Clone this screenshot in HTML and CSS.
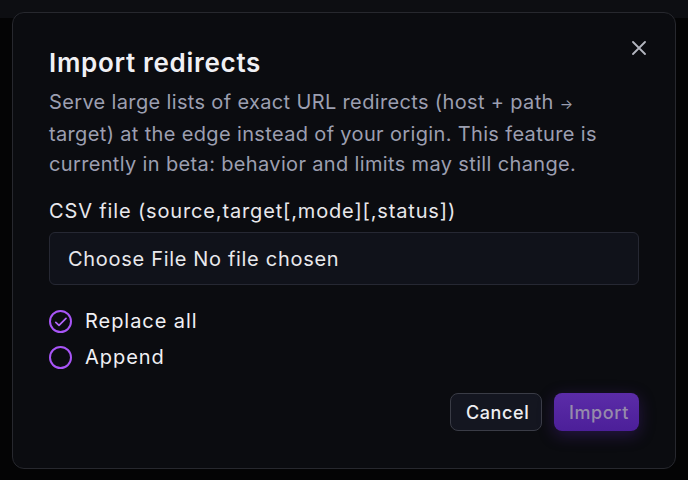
FILE: index.html
```html
<!DOCTYPE html>
<html lang="en">
<head>
    <meta charset="UTF-8">
    <meta name="viewport" content="width=device-width, initial-scale=1.0">
    <title>Import redirects</title>
    <link rel="stylesheet" href="styles.css">
</head>
<body>
    <div class="page-header"></div>

    <div class="overlay">
        <div class="modal" role="dialog" aria-labelledby="modalTitle">
            <button type="button" class="btn-close" aria-label="Close">
                <svg width="14" height="14" viewBox="0 0 14 14" fill="none">
                    <path d="M1 1L13 13M13 1L1 13" stroke="currentColor" stroke-width="1.8" stroke-linecap="round"/>
                </svg>
            </button>

            <h2 id="modalTitle" class="modal-title">Import redirects</h2>
            <p class="modal-desc">Serve large lists of exact URL redirects (host + path <span class="arrow">→</span> target) at the edge instead of your origin. This feature is currently in beta: behavior and limits may still change.</p>

            <form id="importForm">
                <div class="form-group">
                    <label for="csvFile">CSV file (source,target[,mode][,status])</label>
                    <div class="file-box">
                        <input type="file" id="csvFile" name="csvFile" accept=".csv">
                    </div>
                </div>

                <div class="radio-group">
                    <label class="radio">
                        <input type="radio" name="mode" value="replace" checked>
                        <span class="radio-mark">
                            <svg width="14" height="14" viewBox="0 0 14 14" fill="none">
                                <path d="M1.8 7.4L5 10.4L12 3.4" stroke="currentColor" stroke-width="1.7" stroke-linecap="round" stroke-linejoin="round"/>
                            </svg>
                        </span>
                        Replace all
                    </label>
                    <label class="radio">
                        <input type="radio" name="mode" value="append">
                        <span class="radio-mark">
                            <svg width="14" height="14" viewBox="0 0 14 14" fill="none">
                                <path d="M1.8 7.4L5 10.4L12 3.4" stroke="currentColor" stroke-width="1.7" stroke-linecap="round" stroke-linejoin="round"/>
                            </svg>
                        </span>
                        Append
                    </label>
                </div>

                <div class="modal-actions">
                    <button type="button" class="btn btn-cancel">Cancel</button>
                    <button type="submit" class="btn btn-import" disabled>Import</button>
                </div>
            </form>
        </div>
    </div>
</body>
</html>
```

FILE: styles.css
```css
* {
    margin: 0;
    padding: 0;
    box-sizing: border-box;
}

body {
    font-family: Inter, 'Noto Sans', 'DejaVu Sans', sans-serif;
    background: #040405;
    min-height: 100vh;
    color: #eeeef2;
}

.page-header {
    height: 18px;
    background: #0d0e12;
}

.overlay {
    position: fixed;
    inset: 0;
    padding: 12px;
    display: flex;
    align-items: flex-start;
    justify-content: center;
}

.modal {
    position: relative;
    width: 664px;
    background: #0b0c10;
    border: 1px solid #27282e;
    border-radius: 12px;
    padding: 34px 36px 37px;
}

.btn-close {
    position: absolute;
    top: 23px;
    right: 24px;
    width: 24px;
    height: 24px;
    display: flex;
    align-items: center;
    justify-content: center;
    background: none;
    border: none;
    color: #b4b6c0;
    cursor: pointer;
}

.modal-title {
    font-size: 26px;
    font-weight: 600;
    line-height: 32px;
    letter-spacing: 0.7px;
    color: #f0f0f4;
}

.modal-desc {
    margin-top: 8px;
    font-size: 20px;
    line-height: 30px;
    letter-spacing: 0.35px;
    color: #9c9fb0;
}

.modal-desc .arrow {
    font-size: 14px;
}

.form-group {
    margin-top: 17px;
}

.form-group label {
    display: block;
    font-size: 20px;
    line-height: 30px;
    letter-spacing: 0.85px;
    color: #e8e8ec;
    margin-bottom: 6px;
}

.file-box {
    height: 53px;
    display: flex;
    align-items: center;
    padding: 0 18px;
    background: #10121a;
    border: 1px solid #262833;
    border-radius: 6px;
}

.file-box input {
    font-family: inherit;
    font-size: 20px;
    letter-spacing: 0.7px;
    color: #e8e8ec;
    width: 100%;
}

.file-box input::file-selector-button {
    font-family: inherit;
    font-size: 20px;
    letter-spacing: 0.7px;
    color: #e8e8ec;
    background: none;
    border: none;
    padding: 0;
    margin: 0 6px 0 0;
    cursor: pointer;
}

.radio-group {
    margin-top: 25px;
    display: flex;
    flex-direction: column;
    gap: 13px;
}

.radio {
    display: flex;
    align-items: center;
    gap: 13px;
    font-size: 20px;
    line-height: 23px;
    letter-spacing: 0.95px;
    color: #f0f0f4;
    cursor: pointer;
}

.radio input {
    display: none;
}

.radio-mark {
    width: 23px;
    height: 23px;
    border: 2px solid #a855f7;
    border-radius: 50%;
    display: flex;
    align-items: center;
    justify-content: center;
    color: #b266f8;
}

.radio-mark svg {
    visibility: hidden;
}

.radio input:checked + .radio-mark svg {
    visibility: visible;
}

.modal-actions {
    margin-top: 24px;
    display: flex;
    justify-content: flex-end;
    gap: 12px;
}

.btn {
    height: 38px;
    padding: 0 15px;
    border-radius: 8px;
    font-family: inherit;
    font-size: 18px;
    font-weight: 500;
    letter-spacing: 0.6px;
}

.btn-cancel {
    width: 92px;
    background: #141620;
    border: 1px solid #3a3c46;
    color: #eeeef2;
    cursor: pointer;
}

.btn-import {
    width: 85px;
    background: linear-gradient(180deg, #5b2ca8 0%, #4c1f99 100%);
    border: none;
    color: #968bab;
    box-shadow: 0 4px 16px rgba(88, 40, 170, 0.35);
}
```
